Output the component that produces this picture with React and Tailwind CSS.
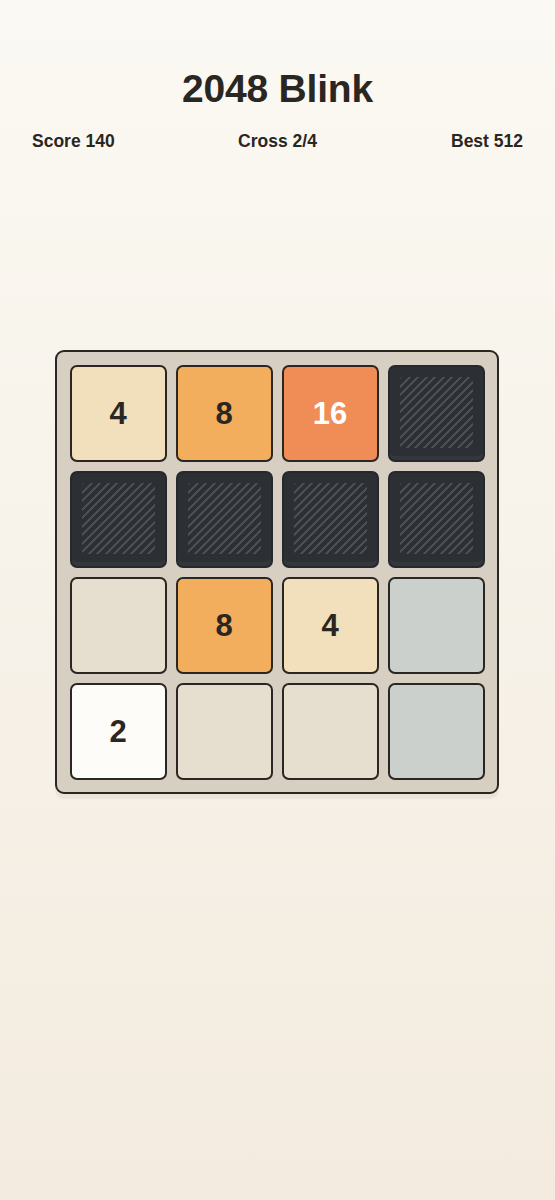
import React from "react";

const tiles = [
  { v: "4", bg: "bg-[#f2dfbb]", t: "text-[#2a2622]" },
  { v: "8", bg: "bg-[#f2ae5c]", t: "text-[#2a2622]" },
  { v: "16", bg: "bg-[#f08c55]", t: "text-white" },
  { dark: true },
  { dark: true },
  { dark: true },
  { dark: true },
  { dark: true },
  { v: "", bg: "bg-[#e6dece]" },
  { v: "8", bg: "bg-[#f2ae5c]", t: "text-[#2a2622]" },
  { v: "4", bg: "bg-[#f2dfbb]", t: "text-[#2a2622]" },
  { v: "", bg: "bg-[#cbd0cd]" },
  { v: "2", bg: "bg-[#fdfcf9]", t: "text-[#2a2622]" },
  { v: "", bg: "bg-[#e6dece]" },
  { v: "", bg: "bg-[#e6dece]" },
  { v: "", bg: "bg-[#cbd0cd]" },
];

function Tile({ tile }) {
  if (tile.dark) {
    return (
      <div className="w-[97px] h-[97px] rounded-[7px] border-2 border-[#26292c] bg-[#2c2f33] shadow-[inset_0_-4px_0_rgba(255,255,255,0.04)] p-[10px] pb-[12px]">
        <div className="w-full h-full rounded-[3px] bg-[repeating-linear-gradient(135deg,#4b4f53_0px,#4b4f53_2px,transparent_2px,transparent_6px)]" />
      </div>
    );
  }
  return (
    <div
      className={`w-[97px] h-[97px] rounded-[7px] border-2 border-[#2a2622] ${tile.bg} flex items-center justify-center`}
    >
      <span className={`text-[31px] font-bold leading-none ${tile.t || ""}`}>{tile.v}</span>
    </div>
  );
}

export default function App() {
  return (
    <div
      className="w-[555px] h-[1200px] bg-gradient-to-b from-[#fbf9f3] to-[#f3ebdf] flex flex-col items-center text-[#2a2622]"
      style={{ fontFamily: '"Liberation Sans", Arial, sans-serif' }}
    >
      <h1 className="mt-[67px] text-[39px] font-bold leading-[44px] tracking-[-0.2px]">2048 Blink</h1>
      <div className="mt-[19px] w-full px-[32px] grid grid-cols-3 text-[17.5px] font-bold leading-[22px]">
        <span className="text-left">Score 140</span>
        <span className="text-center">Cross 2/4</span>
        <span className="text-right">Best 512</span>
      </div>
      <div className="mt-[198px] -translate-x-[1px] w-[444px] rounded-[9px] border-2 border-[#2a2622] bg-[#d8cfc3] pt-[13px] pb-[12px] pl-[13px] pr-[12px] shadow-[0_5px_0_rgba(120,100,70,0.08)]">
        <div className="grid grid-cols-[repeat(4,97px)] gap-[9px]">
          {tiles.map((t, i) => (
            <Tile key={i} tile={t} />
          ))}
        </div>
      </div>
    </div>
  );
}
